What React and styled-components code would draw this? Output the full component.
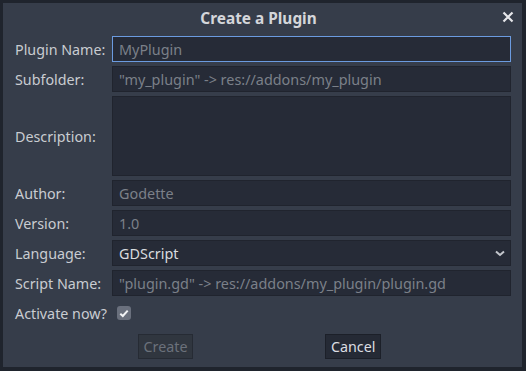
import React from 'react';
import styled, { createGlobalStyle } from 'styled-components';

const GlobalStyle = createGlobalStyle`
    html, body {
        margin: 0;
        padding: 0;
        background-color: #1f242d;
    }
    * {
        box-sizing: border-box;
    }
`;

const Screen = styled.div`
    width: 526px;
    height: 371px;
    padding: 3px 4px 4px 3px;
    background-color: #1f242d;
    font-family: "Noto Sans", "Open Sans", sans-serif;
`;

const Dialog = styled.div`
    height: 100%;
    background-color: #363d4a;
    display: flex;
    flex-direction: column;
`;

const TitleBar = styled.div`
    height: 33px;
    display: grid;
    grid-template-columns: 1fr auto 1fr;
    align-items: center;
    padding: 0 8px 2px 0;
`;

const Title = styled.div`
    grid-column: 2;
    font-size: 15.4px;
    font-weight: bold;
    color: #d4d6da;
`;

const Close = styled.div`
    grid-column: 3;
    justify-self: end;
    display: flex;
    margin-top: -3px;
`;

const Form = styled.div`
    display: grid;
    grid-template-columns: 98px 1fr;
    row-gap: 4px;
    padding: 0 11px 0 11px;
`;

const Label = styled.div`
    display: flex;
    align-items: center;
    font-size: 14.3px;
    color: #c9ccd1;
    padding-left: 1px;
    white-space: nowrap;
`;

const Field = styled.div`
    height: ${(p) => p.h || 26}px;
    display: flex;
    align-items: center;
    justify-content: space-between;
    padding: 0 5px 0 6px;
    background-color: #262b37;
    border: 1px solid ${(p) => (p.focused ? '#6b9be0' : '#20242e')};
    font-size: 14.4px;
    color: ${(p) => (p.value ? '#d9dbdf' : '#7b8089')};
    white-space: nowrap;
    overflow: hidden;
`;

const CheckRow = styled.div`
    height: 26px;
    display: flex;
    align-items: center;
    padding-left: 5px;
`;

const CheckBox = styled.div`
    width: 14px;
    height: 14px;
    border-radius: 3px;
    background-color: #6a707d;
    display: flex;
    align-items: center;
    justify-content: center;
`;

const Buttons = styled.div`
    display: flex;
    justify-content: space-evenly;
    padding: 0 9px 0 3px;
    margin-top: 8px;
`;

const Button = styled.div`
    height: 25px;
    padding: 0 ${(p) => p.pad || 6}px;
    display: flex;
    align-items: center;
    font-size: 14.3px;
    color: ${(p) => (p.disabled ? '#6b717b' : '#dcdee2')};
    background-color: ${(p) => (p.disabled ? '#30363f' : '#252a35')};
    border: 1px solid ${(p) => (p.disabled ? '#262b34' : '#1c2029')};
`;

const App = () => {
    return (
        <Screen>
            <GlobalStyle />
            <Dialog>
                <TitleBar>
                    <Title>Create a Plugin</Title>
                    <Close>
                        <svg width="12" height="12" viewBox="0 0 12 12">
                            <path d="M1.5 1.5 L10.5 10.5 M10.5 1.5 L1.5 10.5" stroke="#e6e7ea" strokeWidth="2.2" />
                        </svg>
                    </Close>
                </TitleBar>
                <Form>
                    <Label>Plugin Name:</Label>
                    <Field focused>MyPlugin</Field>
                    <Label>Subfolder:</Label>
                    <Field>"my_plugin" -&gt; res://addons/my_plugin</Field>
                    <Label>Description:</Label>
                    <Field h={80} />
                    <Label>Author:</Label>
                    <Field>Godette</Field>
                    <Label>Version:</Label>
                    <Field>1.0</Field>
                    <Label>Language:</Label>
                    <Field value>
                        GDScript
                        <svg width="10" height="7" viewBox="0 0 10 7">
                            <path d="M1 1.5 L5 5 L9 1.5" stroke="#c3c6cc" strokeWidth="2" fill="none" />
                        </svg>
                    </Field>
                    <Label>Script Name:</Label>
                    <Field>"plugin.gd" -&gt; res://addons/my_plugin/plugin.gd</Field>
                    <Label>Activate now?</Label>
                    <CheckRow>
                        <CheckBox>
                            <svg width="10" height="9" viewBox="0 0 10 9">
                                <path d="M1.3 4.8 L3.8 7 L8.7 1.6" stroke="#f2f3f5" strokeWidth="2" fill="none" />
                            </svg>
                        </CheckBox>
                    </CheckRow>
                </Form>
                <Buttons>
                    <Button disabled pad={5}>Create</Button>
                    <Button pad={5}>Cancel</Button>
                </Buttons>
            </Dialog>
        </Screen>
    );
};

export default App;
